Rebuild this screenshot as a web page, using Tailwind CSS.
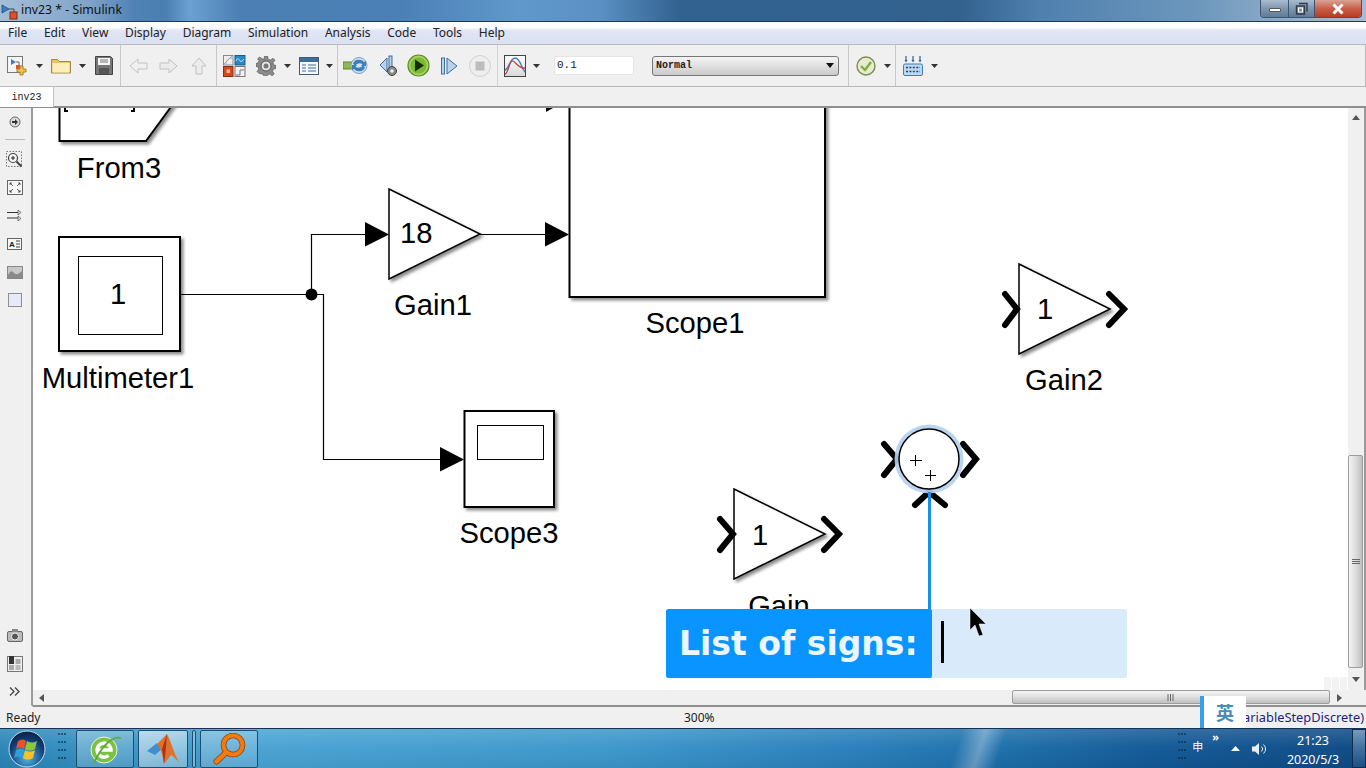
<!DOCTYPE html>
<html><head><meta charset="utf-8"><title>inv23 * - Simulink</title>
<script src="https://cdn.jsdelivr.net/npm/@tailwindcss/browser@4"></script></head>
<body class="overflow-hidden bg-[#f0f0f0]">
<div class="relative flex h-[768px] w-[1366px] flex-col overflow-hidden font-['Noto_Sans',sans-serif] text-[12px] text-[#1a1a1a]">

<!-- title bar -->
<div class="flex h-[22px] shrink-0 items-center border-b border-[#1c3a58] bg-[linear-gradient(90deg,#a5bed6_0px,#7ea3c8_90px,#4f82b5_135px,#4a7fb2_165px,#6aa0d2_190px,#4c80b4_240px,#4a80b6_400px,#6198cb_520px,#5a90c3_600px,#326290_680px,#33628f_960px,#4f80ae_1040px,#6d97bd_1200px,#95b0ca_1300px,#a8bdd2_1366px)]">
  <svg class="ml-[1px] shrink-0" width="17" height="18" viewBox="0 0 17 18"><path d="M1 3l7 4-7 4z" fill="#3a7fc0" stroke="#1d4e85" stroke-width=".8"/><path d="M8 7h5v4" fill="none" stroke="#444"/><rect x="9" y="10" width="7" height="7" fill="#d9542b" stroke="#7d2a10"/></svg>
  <span class="ml-[3px] text-[12.300px] text-[#111]">inv23 * - Simulink</span>
  <div class="ml-auto mr-[4px] flex h-[18px] self-start overflow-hidden rounded-b-[4px] border border-t-0 border-[#3c5470]">
    <div class="flex w-[28px] items-center justify-center border-r border-[#3c5470] bg-[linear-gradient(#a9bccf,#7f97ae_50%,#5f7c98)]"><span class="mt-[2px] h-[4px] w-[12px] rounded-[1px] border border-[#555] bg-white"></span></div>
    <div class="flex w-[26px] items-center justify-center border-r border-[#3c5470] bg-[linear-gradient(#a9bccf,#7f97ae_50%,#5f7c98)]"><svg width="13" height="13" viewBox="0 0 13 13"><path d="M4 1.500h8v8M1.500 4h8v8h-8z" fill="none" stroke="#2e3b48" stroke-width="1.400"/><rect x="3.500" y="6" width="4" height="4" fill="none" stroke="#fff"/></svg></div>
    <div class="flex w-[46px] items-center justify-center bg-[linear-gradient(#d9a295,#c9604a_50%,#b83a20)]"><svg width="14" height="12" viewBox="0 0 14 12"><path d="M2.500 1.500l9 9M11.500 1.500l-9 9" stroke="#fff" stroke-width="3"/></svg></div>
  </div>
</div>

<!-- menu -->
<div class="flex h-[22px] shrink-0 items-center gap-[16.700px] bg-[linear-gradient(#ffffff,#fdfdfe_25%,#dfe5f4_40%,#dbe1f1)] pl-[8px] pr-1 text-[#222]">
  <span>File</span><span>Edit</span><span>View</span><span>Display</span><span>Diagram</span><span>Simulation</span><span>Analysis</span><span>Code</span><span>Tools</span><span>Help</span>
</div>

<!-- toolbar -->
<div class="flex h-[43px] shrink-0 items-center border-y border-r border-[#b9b9b9] bg-[#f0f0f0]">
  <div class="flex h-full w-[121px] shrink-0 items-center border-r border-[#c8c8c8] pl-[7px]">
    <svg width="21" height="20" viewBox="0 0 21 20"><rect x=".5" y=".5" width="15" height="16" fill="#f4f4f4" stroke="#777"/><path d="M4 3l5 3-5 3z" fill="#3a7fc0"/><path d="M9 6h3v4" fill="none" stroke="#666"/><rect x="9" y="9" width="4" height="4" fill="#d9542b"/><path d="M13 10h3v3h3v3h-3v3h-3v-3h-3v-3h3z" fill="#f1c64c" stroke="#a8812a"/></svg>
    <svg class="ml-[8px]" width="7" height="4" viewBox="0 0 7 4"><path d="M0 0h7L3.500 4z" fill="#333"/></svg>
    <svg class="ml-[8px]" width="20" height="16" viewBox="0 0 20 16"><path d="M.5 15V1.500h6l2 2h11V15z" fill="#e8c566" stroke="#a08a4a"/><path d="M1.500 5h17v9.500h-17z" fill="#fbeeb8"/></svg>
    <svg class="ml-[8px]" width="7" height="4" viewBox="0 0 7 4"><path d="M0 0h7L3.500 4z" fill="#333"/></svg>
    <svg class="ml-[9px]" width="18" height="19" viewBox="0 0 18 19"><path d="M.5.500h15l2 2v16H.5z" fill="#777" stroke="#444"/><rect x="3" y="2" width="12" height="7" fill="#f6f6f6"/><path d="M5 4h8M5 6h8" stroke="#777"/><rect x="4" y="12" width="10" height="6" fill="#555"/></svg>
  </div>
  <div class="flex h-full w-[96px] shrink-0 items-center border-r border-[#c8c8c8] pl-[8px]">
    <svg width="19" height="16" viewBox="0 0 19 16"><path d="M1 8l8-7v4h9v6H9v4z" fill="#f0f0f0" stroke="#c2c2c2"/></svg>
    <svg class="ml-[11px]" width="19" height="16" viewBox="0 0 19 16"><path d="M18 8l-8-7v4H1v6h9v4z" fill="#ececec" stroke="#c2c2c2"/></svg>
    <svg class="ml-[13px]" width="16" height="18" viewBox="0 0 16 18"><path d="M8 1l7 8h-4v8H5V9H1z" fill="#ececec" stroke="#c2c2c2"/></svg>
  </div>
  <div class="flex h-full w-[121px] shrink-0 items-center border-r border-[#c8c8c8] pl-[6px]">
    <svg width="23" height="22" viewBox="0 0 23 22"><rect x=".5" y=".5" width="9.500" height="9.500" fill="#eee" stroke="#888"/><path d="M1 9L9 1M3 9c0-4 3-6 6-6" fill="none" stroke="#aaa"/><rect x="12" y=".5" width="10" height="9.500" fill="#2a87c4" stroke="#1d5f8c"/><path d="M13 6c2-5 3-1 4 0s3 0 4-2" stroke="#bfe4fa" fill="none"/><rect x=".5" y="11.500" width="9.500" height="10" fill="#d9481c" stroke="#8f2f10"/><rect x="3.500" y="14.500" width="3.500" height="3.500" fill="#f4b9a0"/><rect x="12" y="11.500" width="10" height="10" fill="#f2f2f2" stroke="#777"/><path d="M13 20h4v-5h4" fill="none" stroke="#777"/></svg>
    <svg class="ml-[10px]" width="20" height="20" viewBox="0 0 20 20"><path d="M8.500 0h3l.500 3 2.500 1 2.500-1.800 2 2L17 6.700l1 2.300 2 .5v3l-2.500.5-1 2.300 1.700 2.500-2 2-2.500-1.700-2.400 1-.3 2.400h-3l-.5-2.800-2.200-1L3 17.500l-2-2L2.800 13l-1-2.300L0 10.500v-3l2-.5 1-2.300L1.500 3l2-2 2.500 1.700L8 3.500z" fill="#8a8a8a" stroke="#4f4f4f" stroke-width=".6"/><circle cx="10" cy="10" r="5" fill="#e6e6e6" stroke="#555"/><circle cx="10" cy="10" r="2.500" fill="#777"/></svg>
    <svg class="ml-[8px]" width="7" height="4" viewBox="0 0 7 4"><path d="M0 0h7L3.500 4z" fill="#333"/></svg>
    <svg class="ml-[8px]" width="20" height="18" viewBox="0 0 20 18"><rect x=".5" y=".5" width="19" height="17" fill="#f4f8fc" stroke="#4a5a6a"/><rect x="1" y="1" width="18" height="4" fill="#3d6d9d"/><path d="M3 8h4m2 0h8M3 11h4m2 0h8M3 14h4m2 0h8" stroke="#3d6d9d" stroke-width="1.200"/></svg>
    <svg class="ml-[7px]" width="7" height="4" viewBox="0 0 7 4"><path d="M0 0h7L3.500 4z" fill="#333"/></svg>
  </div>
  <div class="flex h-full w-[160px] shrink-0 items-center border-r border-[#d2d2d2] pl-[5px]">
    <svg width="25" height="19" viewBox="0 0 25 19"><rect x="0" y="6" width="9" height="7" fill="#8fb84f" stroke="#5f8030"/><circle cx="16" cy="9.500" r="8" fill="#cfe0f2" stroke="#7aa0c8"/><path d="M10 8a6 5 0 0 1 11-2l2-1v5h-5l1.500-1.500a4 3 0 0 0-7 1zM22 11a6 5 0 0 1-11 2l-2 1V9h5l-1.500 1.500a4 3 0 0 0 7-1z" fill="#3f7fb8"/></svg>
    <svg class="ml-[11px]" width="20" height="22" viewBox="0 0 20 22"><path d="M8 3L1 10l7 7z" fill="#b9d3ec" stroke="#3e6d9f"/><rect x="10" y="1" width="3" height="15" fill="#b9d3ec" stroke="#3e6d9f"/><circle cx="13" cy="16" r="4.500" fill="#888" stroke="#444"/><circle cx="13" cy="16" r="1.800" fill="#eee"/></svg>
    <svg class="ml-[8px]" width="23" height="23" viewBox="0 0 23 23"><circle cx="11.500" cy="11.500" r="10.500" fill="#a5d25a" stroke="#5d8a2a" stroke-width="1.200"/><circle cx="11.500" cy="11.500" r="8" fill="#7cb930"/><path d="M8 5.500l9 6-9 6z" fill="#142a08"/></svg>
    <svg class="ml-[11px]" width="17" height="18" viewBox="0 0 17 18"><rect x=".5" y="1" width="3" height="16" fill="#b9d3ec" stroke="#3e6d9f"/><path d="M6 1l10 8-10 8z" fill="#b9d3ec" stroke="#3e6d9f"/></svg>
    <svg class="ml-[11px]" width="22" height="22" viewBox="0 0 22 22"><circle cx="11" cy="11" r="10.500" fill="#eee" stroke="#d0d0d0"/><rect x="6.500" y="6.500" width="9" height="9" fill="#bcbcbc"/></svg>
  </div>
  <div class="flex h-full w-[351px] shrink-0 items-center border-r border-[#c8c8c8] pl-[6px]">
    <svg width="22" height="22" viewBox="0 0 22 22"><defs><linearGradient id="sg" x2="0" y2="1"><stop offset="0" stop-color="#fff"/><stop offset="1" stop-color="#d8d8d8"/></linearGradient></defs><rect x=".5" y=".5" width="21" height="21" fill="url(#sg)" stroke="#444"/><path d="M1 15C5 14 6 3 11 3s6 9 10 14" fill="none" stroke="#3f7fbf" stroke-width="1.300"/><path d="M1 19C4 19 5 7 8 6s6 8 13 7" fill="none" stroke="#b8413d" stroke-width="1.300"/></svg>
    <svg class="ml-[7px]" width="7" height="4" viewBox="0 0 7 4"><path d="M0 0h7L3.500 4z" fill="#333"/></svg>
    <div class="ml-[14px] flex h-[19px] w-[80px] items-center rounded-[2px] border border-[#e4e4e4] bg-white pl-[2px] font-['Liberation_Mono',monospace] text-[11px] text-[#222]">0.1</div>
    <div class="ml-[18px] flex h-[20px] w-[187px] items-center rounded-[3px] border border-[#777] bg-[linear-gradient(#f4f4f4,#e0e0e0_50%,#c9c9c9)] pl-[3px] font-['Liberation_Mono',monospace] text-[10px] font-bold text-[#222]">Normal
      <svg class="ml-auto mr-[4px]" width="8" height="5" viewBox="0 0 8 5"><path d="M0 0h8L4 5z" fill="#111"/></svg>
    </div>
  </div>
  <div class="flex h-full w-[47px] shrink-0 items-center border-r border-[#c8c8c8] pl-[7px]">
    <svg width="20" height="20" viewBox="0 0 20 20"><circle cx="10" cy="10" r="9" fill="#e6ecd2" stroke="#7d8a55" stroke-width="1.400"/><path d="M5 10l4 4 6-8" fill="none" stroke="#7fae3c" stroke-width="2.400"/></svg>
    <svg class="ml-[8px]" width="7" height="4" viewBox="0 0 7 4"><path d="M0 0h7L3.500 4z" fill="#333"/></svg>
  </div>
  <div class="flex h-full items-center pl-[7px]">
    <svg width="20" height="20" viewBox="0 0 20 20"><path d="M3 0v5M10 0v5M17 0v5" stroke="#2f5f8f" stroke-width="1.200"/><path d="M1.500 4h3L3 6.500zM8.500 4h3L10 6.500zM15.500 4h3L17 6.500z" fill="#2f5f8f"/><rect x=".5" y="8" width="19" height="11.500" rx="1.500" fill="#bcd9f2" stroke="#3f7fb8"/><path d="M3 11.500h14M3 15.500h14" stroke="#24456a" stroke-width="1.600" stroke-dasharray="2 1.400"/></svg>
    <svg class="ml-[8px]" width="7" height="4" viewBox="0 0 7 4"><path d="M0 0h7L3.500 4z" fill="#333"/></svg>
  </div>
</div>

<!-- tab row -->
<div class="flex h-[21px] shrink-0 border-b-2 border-[#8f8f8f] bg-[#f0f0f0]">
  <div class="flex h-[20px] w-[54px] items-center justify-center border-r border-[#c4c4c4] bg-white font-['Liberation_Mono',monospace] text-[10px] text-[#222]">inv23</div>
</div>

<!-- body -->
<div class="flex min-h-0 flex-1">
  <div class="flex w-[33px] shrink-0 flex-col items-center border-r-2 border-b-2 border-r-[#9a9a9a] border-b-[#f0f0f0] bg-[#f0f0f0] pr-[2px]">
    <svg class="mt-[8px]" width="12" height="12" viewBox="0 0 12 12"><circle cx="6" cy="6" r="5" fill="#ddd" stroke="#666"/><path d="M3 5h3V3l3 3-3 3V7H3z" fill="#333"/></svg>
    <div class="mt-[11px] h-px w-[20px] bg-[#bbb]"></div>
    <svg class="mt-[11px]" width="17" height="17" viewBox="0 0 17 17"><rect x=".5" y=".5" width="15" height="15" fill="none" stroke="#777" stroke-dasharray="1.500 1.500"/><circle cx="7" cy="7" r="4.500" fill="#f6f6f6" stroke="#444" stroke-width="1.200"/><path d="M5 7h4M7 5v4" stroke="#222"/><path d="M10.500 10.500l5 5" stroke="#444" stroke-width="2"/></svg>
    <svg class="mt-[12px]" width="16" height="15" viewBox="0 0 16 15"><rect x=".5" y=".5" width="15" height="14" fill="#f6f6f6" stroke="#666"/><path d="M3 5V3h2M11 3h2v2M3 10v2h2M11 12h2v-2M3 3l3 3M13 3l-3 3M3 12l3-3M13 12l-3-3" fill="none" stroke="#333" stroke-width=".8"/></svg>
    <svg class="mt-[15px]" width="15" height="11" viewBox="0 0 15 11"><path d="M0 2.500h11M0 8h11" stroke="#333" stroke-width="1"/><path d="M11 0l3 2.500L11 5zM11 6l3 2.500L11 11z" fill="#ddd" stroke="#555" stroke-width=".7"/></svg>
    <svg class="mt-[17px]" width="15" height="12" viewBox="0 0 15 12"><rect x=".5" y=".5" width="14" height="11" fill="#f6f6f6" stroke="#666"/><text x="2" y="9" font-family="Liberation Sans" font-size="8" font-weight="700" fill="#222">A</text><path d="M9 3h4M9 6h4M9 9h4" stroke="#444"/></svg>
    <svg class="mt-[16px]" width="16" height="13" viewBox="0 0 16 13"><rect x=".5" y=".5" width="15" height="12" fill="#c8c8c8" stroke="#888"/><path d="M1 9c3-5 4-4 6-2s4 2 8-2v7H1z" fill="#8a8a8a"/></svg>
    <div class="mt-[14px] h-[14px] w-[14px] border border-[#8e8e8e] bg-[#e8e8fb]"></div>
    <svg class="mt-auto" width="16" height="13" viewBox="0 0 16 13"><rect x=".5" y="2.500" width="15" height="10" rx="1.500" fill="#bbb" stroke="#666"/><rect x="5" y="0" width="6" height="3" fill="#888"/><circle cx="8" cy="7.500" r="3.500" fill="#555" stroke="#eee"/></svg>
    <svg class="mt-[14px]" width="16" height="16" viewBox="0 0 16 16"><rect x=".5" y=".5" width="15" height="15" fill="#eee" stroke="#777"/><rect x="2" y="0" width="5" height="8" fill="#333"/><rect x="2" y="9" width="5" height="5" fill="#aaa"/><rect x="8.500" y="3" width="5" height="5" fill="#aaa"/><rect x="8.500" y="9" width="5" height="5" fill="#bbb"/></svg>
    <svg class="mb-[9px] mt-[15px]" width="11" height="9" viewBox="0 0 11 9"><path d="M1 .5l4 4-4 4M6 .5l4 4-4 4" fill="none" stroke="#444" stroke-width="1.300"/></svg>
  </div>

  <div class="flex min-w-0 flex-1 flex-col">
    <div class="flex min-h-0 flex-1">
      <!-- canvas: free-form diagram -->
      <div class="relative min-w-0 flex-1 overflow-hidden bg-white">
        <svg class="block font-['Liberation_Sans',sans-serif] text-[29.200px]" width="1315" height="582" viewBox="33 108 1315 582">
          <defs><filter id="s" x="-10%" y="-10%" width="125%" height="125%"><feDropShadow dx="2.500" dy="2.500" stdDeviation="1.800" flood-color="#000" flood-opacity=".45"/></filter></defs>
          <!-- From3 -->
          <path d="M59.500 100V141H146L176 100" fill="#fff" stroke="#000" stroke-width="2" filter="url(#s)"/>
          <path d="M65 108v3h3M134 108v3h-3" fill="none" stroke="#000" stroke-width="2"/>
          <text x="119" y="178" text-anchor="middle">From3</text>
          <!-- Multimeter1 -->
          <rect x="59" y="237" width="121" height="114" fill="#fff" stroke="#000" stroke-width="2" filter="url(#s)"/>
          <rect x="78.500" y="256.500" width="84" height="78" fill="#fff" stroke="#000"/>
          <text x="118" y="304" text-anchor="middle">1</text>
          <text x="118" y="388" text-anchor="middle">Multimeter1</text>
          <!-- wires -->
          <path d="M180 294.500H323.500V459.500H442M311.500 294.500V234.500H368M480 234.500H547" fill="none" stroke="#000" stroke-width="1.200"/>
          <circle cx="311.500" cy="294.500" r="6"/>
          <path d="M365 222L389 234.500L365 246.500zM545 222L569 234.500L545 246.500zM440 447L464 459.500L440 471.500zM546 108l7 0-7 4z"/>
          <!-- Gain1 -->
          <path d="M389 189L480 234L389 279z" fill="#fff" stroke="#000" stroke-width="1.500" filter="url(#s)"/>
          <text x="400" y="243">18</text>
          <text x="433" y="315" text-anchor="middle">Gain1</text>
          <!-- Scope1 -->
          <path d="M569.500 100V297H825V100" fill="#fff" stroke="#000" stroke-width="2" filter="url(#s)"/>
          <text x="695" y="333" text-anchor="middle">Scope1</text>
          <!-- Gain2 -->
          <path d="M1019 264L1110 309L1019 354z" fill="#fff" stroke="#000" stroke-width="1.500" filter="url(#s)"/>
          <path d="M1005 294L1017 309L1005 325M1109 294L1124 309L1109 325" fill="none" stroke="#000" stroke-width="6" stroke-linecap="round" stroke-linejoin="miter"/>
          <text x="1045" y="319" text-anchor="middle">1</text>
          <text x="1064" y="390" text-anchor="middle">Gain2</text>
          <!-- Scope3 -->
          <rect x="464.500" y="411" width="89.500" height="96" fill="#fff" stroke="#000" stroke-width="2" filter="url(#s)"/>
          <rect x="477.500" y="425.500" width="66" height="34" fill="#fff" stroke="#000"/>
          <text x="509" y="543" text-anchor="middle">Scope3</text>
          <!-- Gain -->
          <path d="M734 489L825 534L734 579z" fill="#fff" stroke="#000" stroke-width="1.500" filter="url(#s)"/>
          <path d="M720 519L733 534L720 550M824 519L839 534L824 550" fill="none" stroke="#000" stroke-width="6" stroke-linecap="round"/>
          <text x="760" y="545" text-anchor="middle">1</text>
          <text x="779" y="616" text-anchor="middle">Gain</text>
          <!-- Sum -->
          <path d="M884 444L897 459L884 475M963 444L976 459L963 475M915 505L929 492L945 505" fill="none" stroke="#000" stroke-width="6" stroke-linecap="round"/>
          <circle cx="929" cy="459" r="34.500" fill="#b4d0ef" fill-opacity=".9"/>
          <circle cx="929" cy="459" r="30" fill="#fff" stroke="#000" stroke-width="1.500"/>
          <path d="M910 460.500h12M915.500 455v11M925 475.500h11M930.500 470v11" stroke="#000"/>
          <path d="M929.500 492V610" stroke="#1a8fe8" stroke-width="3"/>
        </svg>
        <!-- label-entry popup over the canvas -->
        <div class="absolute left-[633px] top-[501px] flex h-[69px] w-[461px] overflow-hidden rounded-[2px] bg-[#d9ebfb]">
          <div class="flex h-full w-[266px] items-center rounded-[2px] bg-[#0a94ff] pl-[13px] font-['DejaVu_Sans',sans-serif] text-[33px] font-bold text-[#eaf7ff]">List of signs:</div>
          <div class="ml-[9px] mt-[12px] h-[42px] w-[3px] bg-black"></div>
        </div>
        <!-- mouse cursor -->
        <svg class="absolute left-[936px] top-[500px]" width="19" height="30" viewBox="0 0 19 30"><path d="M1 0v22l5-5 4 11 4-1-4-11h7z" fill="#000" stroke="#fff" stroke-width=".5"/></svg>
        <div class="absolute bottom-0 right-0 flex h-[13px] gap-[1px] pr-[1px]"><span class="w-[7px] bg-[#f3f3f3]"></span><span class="w-[7px] bg-[#f3f3f3]"></span><span class="w-[7px] bg-[#f3f3f3]"></span></div>
      </div>
      <!-- vertical scrollbar -->
      <div class="flex w-[18px] shrink-0 flex-col items-center border-r-2 border-[#9a9a9a] bg-[#f0f0f0] pr-[1px]">
        <svg class="mt-[7px]" width="8" height="5" viewBox="0 0 8 5"><path d="M4 0l4 5H0z" fill="#555"/></svg>
        <div class="mt-[335px] flex h-[213px] w-[15px] items-center justify-center rounded-[2px] border border-[#9c9c9c] bg-[linear-gradient(90deg,#f4f4f4,#dedede_50%,#bfbfbf)]"><svg width="8" height="6" viewBox="0 0 8 6"><path d="M0 .5h8M0 2.500h8M0 4.500h8" stroke="#666"/></svg></div>
        <svg class="mt-[9px]" width="8" height="5" viewBox="0 0 8 5"><path d="M4 5l4-5H0z" fill="#555"/></svg>
      </div>
    </div>
    <!-- horizontal scrollbar -->
    <div class="flex h-[17px] shrink-0 border-b-2 border-[#8f8f8f] bg-[#f0f0f0] pl-[6px]">
      <svg class="self-center" width="5" height="8" viewBox="0 0 5 8"><path d="M0 4l5-4v8z" fill="#555"/></svg>
      <div class="ml-[968px] flex h-[14px] w-[318px] items-center justify-center rounded-[2px] border border-[#9c9c9c] bg-[linear-gradient(#f4f4f4,#dedede_50%,#bfbfbf)]"><svg width="8" height="7" viewBox="0 0 8 7"><path d="M1 0v7M3.500 0v7M6 0v7" stroke="#666"/></svg></div>
      <svg class="ml-[7px] self-center" width="5" height="8" viewBox="0 0 5 8"><path d="M5 4L0 0v8z" fill="#555"/></svg>
    </div>
  </div>
</div>

<!-- status bar -->
<div class="relative flex h-[21px] shrink-0 items-center bg-[#f0f0f0] pl-[6px] pt-[1px] text-[#222]">
  <span>Ready</span>
  <span class="absolute left-[684px]">300%</span>
  <span class="absolute right-[2px] text-[12.800px] text-[#1e1e7c]">VariableStepDiscrete)</span>
</div>

<!-- IME floating badge -->
<div class="absolute left-[1200px] top-[696px] flex h-[32px] w-[46px] items-center justify-center border-l-4 border-[#36a0ea] bg-white font-['Noto_Sans_CJK_SC',sans-serif] text-[18px] font-bold text-[#4a8cb8]">英</div>

<!-- taskbar -->
<div class="relative flex h-[40px] shrink-0 items-stretch border-t border-[#16324e] bg-[linear-gradient(180deg,rgba(255,255,255,.14),rgba(255,255,255,.02)_45%,rgba(0,0,0,.06)),linear-gradient(108deg,transparent_915px,rgba(255,255,255,.32)_938px,transparent_958px),linear-gradient(90deg,#2a86b8,#4aa4d4_250px,#3d98cc_600px,#2a80bc_850px,#1d6fab_1000px,#135a98_1150px,#0e4a85_1366px)] text-white">
  <svg class="ml-[8px] mt-[1px] shrink-0" width="38" height="38" viewBox="0 0 38 38">
    <defs><radialGradient id="o" cx=".5" cy=".75" r=".7"><stop offset="0" stop-color="#4fb8e6"/><stop offset=".7" stop-color="#123e78"/><stop offset="1" stop-color="#0a2648"/></radialGradient></defs>
    <circle cx="19" cy="19" r="18" fill="url(#o)" stroke="#c8dcec" stroke-width="1"/>
    <path d="M10 11c3-2 6-2 8 0l-2 8c-3-2-5-2-8 0z" fill="#e8512c"/><path d="M19 11c3 2 6 2 10 0l-2 8c-3 2-7 2-10 0z" fill="#8cc63f"/><path d="M8 20c3-2 5-2 8 0l-2 8c-3-2-5-2-8 0z" fill="#2a9fe0"/><path d="M17 20c3 2 7 2 10 0l-2 8c-3 2-7 2-10 0z" fill="#f9c02e"/>
  </svg>
  <div class="ml-[12px] mt-[4px] grid h-[31px] w-[8px] grid-cols-3 gap-[1px] opacity-60">
    <i class="h-[1.500px] bg-[#0c2a48]"></i><i class="h-[1.500px] bg-[#0c2a48]"></i><i class="h-[1.500px] bg-[#0c2a48]"></i><i class="h-[1.500px] bg-[#0c2a48]"></i><i class="h-[1.500px] bg-[#0c2a48]"></i><i class="h-[1.500px] bg-[#0c2a48]"></i><i class="h-[1.500px] bg-[#0c2a48]"></i><i class="h-[1.500px] bg-[#0c2a48]"></i><i class="h-[1.500px] bg-[#0c2a48]"></i><i class="h-[1.500px] bg-[#0c2a48]"></i><i class="h-[1.500px] bg-[#0c2a48]"></i><i class="h-[1.500px] bg-[#0c2a48]"></i>
  </div>
  <div class="ml-[10px] mt-[1px] flex h-[38px] w-[58px] items-center justify-center rounded-[2px] border border-[#1d4e72] bg-[linear-gradient(160deg,rgba(255,255,255,.35),rgba(255,255,255,.1))]">
    <svg width="34" height="32" viewBox="0 0 34 32"><circle cx="16" cy="17" r="13" fill="#7cc242" stroke="#e8f6d8"/><path d="M9 17h14a7 7 0 1 0-2.500 5.500" fill="none" stroke="#fff" stroke-width="3.500"/><path d="M6 30C14 12 25 3 33 5" fill="none" stroke="#5aae38" stroke-width="1.800"/></svg>
  </div>
  <div class="ml-[4px] mt-[1px] flex h-[38px] w-[50px] items-center justify-center rounded-[2px] border border-[#1d4e72] bg-[linear-gradient(160deg,rgba(255,255,255,.6),rgba(255,255,255,.3))]">
    <svg width="32" height="30" viewBox="0 0 32 30"><path d="M0 17l10-8 5 6-7 6z" fill="#3f8fd0"/><path d="M10 10L20 0c4 7 7 20 12 28-4-3-6-7-8-7l-7 9c-1-8-3-15-7-20z" fill="#e0702a"/><path d="M15 15L20 0c-1 10-1 18-3 30-1-6-1-10-2-15z" fill="#a8321a"/></svg>
  </div>
  <div class="ml-[4px] mt-[1px] h-[38px] w-[4px] rounded-[2px] border border-[#1d4e72] bg-white/30"></div>
  <div class="ml-[4px] mt-[1px] flex h-[38px] w-[58px] items-center justify-center rounded-[2px] border border-[#1d4e72] bg-[linear-gradient(160deg,rgba(255,255,255,.3),rgba(255,255,255,.1))]">
    <svg width="33" height="32" viewBox="0 0 33 32"><circle cx="20" cy="12" r="9.500" fill="none" stroke="#8a4208" stroke-width="5.500"/><path d="M12.500 20L3.500 28.500" stroke="#8a4208" stroke-width="6" stroke-linecap="round"/><circle cx="20" cy="12" r="9.500" fill="none" stroke="#f07a14" stroke-width="4"/><path d="M12.500 20L3.500 28.500" stroke="#f07a14" stroke-width="4.500" stroke-linecap="round"/></svg>
  </div>

  <div class="ml-auto mt-[4px] grid h-[31px] w-[8px] grid-cols-3 gap-[1px] opacity-60">
    <i class="h-[1.500px] bg-[#0c2a48]"></i><i class="h-[1.500px] bg-[#0c2a48]"></i><i class="h-[1.500px] bg-[#0c2a48]"></i><i class="h-[1.500px] bg-[#0c2a48]"></i><i class="h-[1.500px] bg-[#0c2a48]"></i><i class="h-[1.500px] bg-[#0c2a48]"></i><i class="h-[1.500px] bg-[#0c2a48]"></i><i class="h-[1.500px] bg-[#0c2a48]"></i><i class="h-[1.500px] bg-[#0c2a48]"></i><i class="h-[1.500px] bg-[#0c2a48]"></i><i class="h-[1.500px] bg-[#0c2a48]"></i><i class="h-[1.500px] bg-[#0c2a48]"></i>
  </div>
  <span class="ml-[6px] self-center pb-[5px] font-['Noto_Sans_CJK_SC',sans-serif] text-[11px]">申</span>
  <span class="ml-[9px] mt-[1px] text-[11px] font-bold leading-[14px]">»</span>
  <svg class="ml-[12px] self-center" width="9" height="5" viewBox="0 0 9 5"><path d="M4.500 0L9 5H0z" fill="#fff"/></svg>
  <svg class="ml-[12px] self-center" width="16" height="14" viewBox="0 0 16 14"><path d="M0 4.500h3L7 1v12L3 9.500H0z" fill="#e8eef4"/><path d="M9.500 4.500a3.500 3.500 0 0 1 0 5M11.500 2.500a6 6 0 0 1 0 9" fill="none" stroke="#e8eef4"/></svg>
  <div class="ml-[15px] flex w-[60px] flex-col items-center pt-[2px] text-[12.500px] leading-[19px]"><span>21:23</span><span>2020/5/3</span></div>
  <div class="ml-[9px] w-[14px] border border-[#0d2d4c] bg-[linear-gradient(rgba(255,255,255,.35),rgba(255,255,255,.05))]"></div>
</div>
</div>
</body></html>
